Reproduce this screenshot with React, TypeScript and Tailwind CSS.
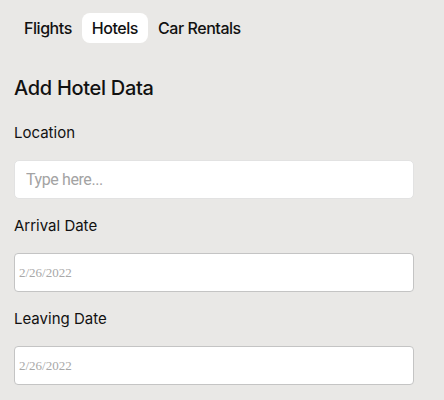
import React from 'react';

const tabs = ['Flights', 'Hotels', 'Car Rentals'];

const Field: React.FC<{ label: string; placeholder: string; date?: boolean }> = ({ label, placeholder, date }) => (
  <div className="flex flex-col">
    <label className="text-[15px] leading-[22px] text-[#111] mb-4">{label}</label>
    {date ? (
      <input
        type="text"
        placeholder={placeholder}
        className="h-[39px] w-full rounded-[4px] border border-[#c4c4c4] bg-white px-[4px] text-[13px] font-['Liberation_Serif',serif] placeholder:text-[#a8a8a8] outline-none"
      />
    ) : (
      <input
        type="text"
        placeholder={placeholder}
        className="h-[39px] w-full rounded-[5px] border border-[#e2e2e2] bg-white px-[11px] text-[16px] tracking-[-0.4px] font-['Roboto',sans-serif] placeholder:text-[#a3a3a3] outline-none"
      />
    )}
  </div>
);

export default function App() {
  return (
    <div className="min-h-[400px] bg-[#e9e8e6] px-[14px] pt-[13px] font-['Inter',sans-serif] text-[#111]">
      <div className="flex">
        {tabs.map((t) => (
          <button
            key={t}
            className={`h-[30px] rounded-[8px] px-[10px] text-[16px] font-medium tracking-[-0.45px] ${
              t === 'Hotels' ? 'bg-white' : ''
            }`}
          >
            {t}
          </button>
        ))}
      </div>
      <h2 className="mt-[31px] text-[20px] leading-[28px] font-medium tracking-[-0.3px]">Add Hotel Data</h2>
      <div className="mt-[20px] flex w-[400px] flex-col gap-4">
        <Field label="Location" placeholder="Type here..." />
        <Field label="Arrival Date" placeholder="2/26/2022" date />
        <Field label="Leaving Date" placeholder="2/26/2022" date />
      </div>
    </div>
  );
}
